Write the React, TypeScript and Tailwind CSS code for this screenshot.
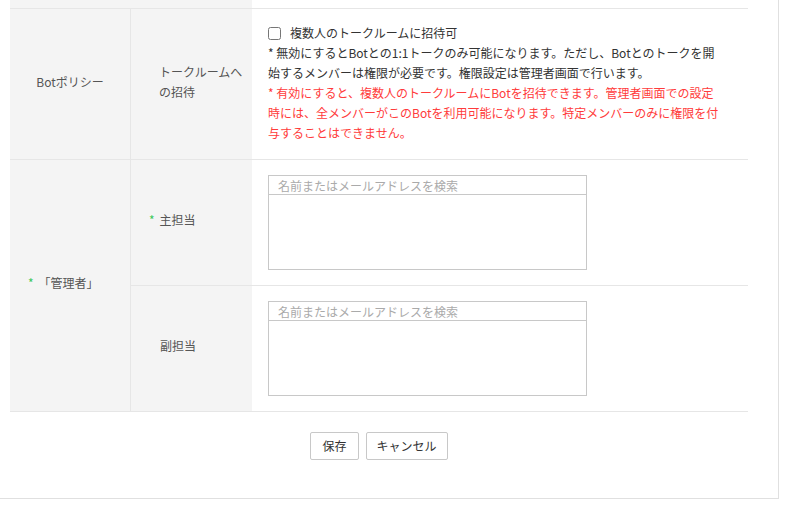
import { Fragment } from "react";

const FONT = "font-['Noto_Sans_CJK_JP','Noto_Sans',sans-serif]";

const BLACK_NOTE = [
  "* 無効にするとBotとの1:1トークのみ可能になります。ただし、Botとのトークを開",
  "始するメンバーは権限が必要です。権限設定は管理者画面で行います。",
];

const RED_NOTE = [
  "* 有効にすると、複数人のトークルームにBotを招待できます。管理者画面での設定",
  "時には、全メンバーがこのBotを利用可能になります。特定メンバーのみに権限を付",
  "与することはできません。",
];

function Required() {
  return <span className="text-[#3cc85a] mr-[5px]">*</span>;
}

function MemberPicker() {
  return (
    <div className="w-[319px] h-[95px] border border-[#c8c8c8] bg-white flex flex-col">
      <input
        type="text"
        placeholder="名前またはメールアドレスを検索"
        className="h-[19px] shrink-0 border-b border-[#c8c8c8] px-[9px] text-[12px] leading-[18px] text-[#333] placeholder-[#aaa] outline-none"
      />
      <div className="flex-1" />
    </div>
  );
}

function Lines({ lines, className }: { lines: string[]; className: string }) {
  return (
    <Fragment>
      {lines.map((line) => (
        <div key={line} className={`whitespace-nowrap ${className}`}>
          {line}
        </div>
      ))}
    </Fragment>
  );
}

export default function App() {
  return (
    <div className={`${FONT} bg-white w-[787px] h-[508px] text-[12px] leading-[20px]`}>
      <div className="w-[779px] h-[499px] border-r border-b border-[#e0e0e0] flex flex-col">
        <div className="ml-[10px] w-[738px]">
          {/* tail of the row above */}
          <div className="flex h-[9px] border-b border-[#e6e6e6]">
            <div className="w-[242px] bg-[#f4f4f4]" />
            <div className="flex-1" />
          </div>

          {/* Bot policy */}
          <div className="flex border-b border-[#e6e6e6]">
            <div className="w-[121px] shrink-0 bg-[#f4f4f4] border-r border-[#e6e6e6] flex items-center justify-center pb-[5px] text-[#555]">
              Botポリシー
            </div>
            <div className="w-[121px] shrink-0 bg-[#f4f4f4] flex items-center pl-[28px] pb-[5px] text-[#555]">
              トークルームへ
              <br />
              の招待
            </div>
            <div className="flex-1 pl-[16px] pt-[14px] pb-[16px] text-[#333]">
              <label className="flex items-center h-[20px]">
                <input type="checkbox" className="w-[13px] h-[13px] m-0 mr-[9px] accent-[#3cc85a]" />
                複数人のトークルームに招待可
              </label>
              <Lines lines={BLACK_NOTE} className="text-[#333]" />
              <Lines lines={RED_NOTE} className="text-[#ff3b3b]" />
            </div>
          </div>

          {/* Admins */}
          <div className="flex border-b border-[#e6e6e6]">
            <div className="w-[121px] shrink-0 bg-[#f4f4f4] border-r border-[#e6e6e6] flex items-center pl-[18px] pb-[5px] text-[#555]">
              <Required />
              「管理者」
            </div>
            <div className="flex-1 flex flex-col">
              <div className="flex h-[126px] border-b border-[#e6e6e6]">
                <div className="w-[121px] shrink-0 bg-[#f4f4f4] flex items-center pl-[18px] pb-[5px] text-[#555]">
                  <Required />
                  主担当
                </div>
                <div className="flex-1 pl-[16px] pt-[15px]">
                  <MemberPicker />
                </div>
              </div>
              <div className="flex h-[125px]">
                <div className="w-[121px] shrink-0 bg-[#f4f4f4] flex items-center pl-[29px] pb-[5px] text-[#555]">
                  副担当
                </div>
                <div className="flex-1 pl-[16px] pt-[15px]">
                  <MemberPicker />
                </div>
              </div>
            </div>
          </div>

          <div className="flex justify-center gap-[7px] pt-[20px]">
            <button
              type="button"
              className="h-[28px] px-[11px] border border-[#c8c8c8] rounded-[2px] bg-white text-[#333] text-[12px]"
            >
              保存
            </button>
            <button
              type="button"
              className="h-[28px] px-[10px] border border-[#c8c8c8] rounded-[2px] bg-white text-[#333] text-[12px]"
            >
              キャンセル
            </button>
          </div>
        </div>
      </div>
    </div>
  );
}
